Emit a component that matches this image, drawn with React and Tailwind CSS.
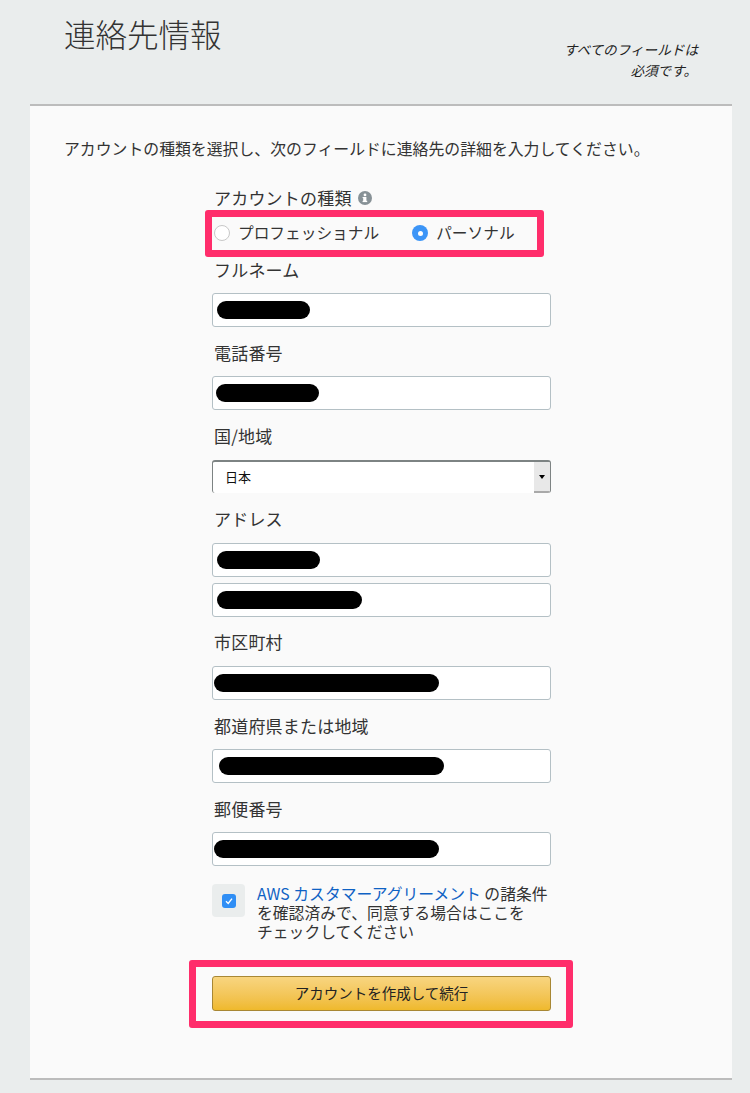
import React from 'react';

const fontStack = "font-['Noto_Sans_CJK_JP','Noto_Sans',sans-serif]";

const Label = ({ children, className = '' }) => (
  <div className={`pl-0.5 text-[17px] leading-[22px] tracking-[0.2px] text-[#333] ${className}`}>{children}</div>
);

// valeurs masquées au feutre noir
const Field = ({ scribble, className = '' }) => (
  <div className={`flex h-[34px] items-center rounded-[3px] border border-[#b4c0c5] bg-white ${className}`}>
    <div className={`h-[18px] rounded-full bg-black ${scribble}`} />
  </div>
);

const App = () => {
  return (
    <div className={`min-h-[1093px] bg-[#eaeded] ${fontStack}`}>
      {/* En-tête */}
      <div className="relative h-[104px]">
        <h1 className="pl-[64px] pt-[11px] text-[31.5px] font-light leading-[44px] text-[#333]">連絡先情報</h1>
        <div className="absolute left-[540px] top-[39px] w-[158px] text-right text-[13.6px] italic leading-[21px] text-[#222]">
          <div>すべてのフィールドは</div>
          <div className="pr-[1px]">必須です。</div>
        </div>
      </div>

      {/* Carte */}
      <div className="relative ml-[30px] mr-[18px] h-[976px] border-y-2 border-[#bcbcbc] bg-[#fafafa]">
        <p className="pl-[34px] pt-[32px] text-[15.86px] leading-[22px] text-[#333]">
          アカウントの種類を選択し、次のフィールドに連絡先の詳細を入力してください。
        </p>

        <div className="ml-[182px] mt-[27px] w-[339px]">
          <Label className="flex items-center gap-1.5">
            アカウントの種類
            <svg width="14" height="14" viewBox="0 0 14 14">
              <circle cx="7" cy="7" r="7" fill="#879196" />
              <rect x="5.2" y="6" width="3.2" height="4.4" fill="#fff" />
              <rect x="4.6" y="9.8" width="4.6" height="1.3" fill="#fff" />
              <rect x="4.6" y="6" width="2" height="1.1" fill="#fff" />
              <circle cx="7" cy="3.9" r="1.4" fill="#fff" />
            </svg>
          </Label>

          <div className="mt-[13px] flex h-[22px] items-center text-[15.7px] leading-[22px] text-[#333]">
            <span className="ml-[2px] h-[16px] w-[16px] rounded-full border border-[#c8c8c8] bg-white" />
            <span className="ml-[8px]">プロフェッショナル</span>
            <span className="ml-[33px] flex h-[16px] w-[16px] items-center justify-center rounded-full bg-[#3c95f7]">
              <span className="h-[5px] w-[5px] rounded-full bg-white" />
            </span>
            <span className="ml-[8px]">パーソナル</span>
          </div>

          <Label className="mt-[15px]">フルネーム</Label>
          <Field scribble="ml-[4px] w-[93px]" className="mt-[12px]" />

          <Label className="mt-[15px]">電話番号</Label>
          <Field scribble="ml-[3px] w-[103px]" className="mt-[12px]" />

          <Label className="mt-[15px]">国/地域</Label>
          <div className="mt-[13px] flex h-[33px] items-stretch overflow-hidden rounded-[3px] border-x border-t-2 border-[#7d8383] bg-white">
            <div className="flex flex-1 items-center pb-[2px] pl-[12px] text-[13px] text-[#111]">日本</div>
            <div className="flex w-[16px] items-center justify-center border-b-2 border-[#a9a9a9] bg-[#e8e8e8]">
              <div className="h-0 w-0 border-x-[3.5px] border-t-[4px] border-x-transparent border-t-black" />
            </div>
          </div>

          <Label className="mt-[15px]">アドレス</Label>
          <Field scribble="ml-[4px] w-[103px]" className="mt-[13px]" />
          <Field scribble="ml-[4px] w-[145px]" className="mt-[6px]" />

          <Label className="mt-[14px]">市区町村</Label>
          <Field scribble="ml-[1px] w-[225px]" className="mt-[13px]" />

          <Label className="mt-[15px]">都道府県または地域</Label>
          <Field scribble="ml-[6px] w-[225px]" className="mt-[12px]" />

          <Label className="mt-[15px]">郵便番号</Label>
          <Field scribble="ml-[1px] w-[225px]" className="mt-[12px]" />

          <div className="mt-[18px] flex">
            <div className="flex h-[33px] w-[33px] shrink-0 items-center justify-center rounded-[4px] bg-[#eaeded]">
              <div className="flex h-[14px] w-[14px] items-center justify-center rounded-[3px] bg-[#2f8ef5]">
                <svg width="10" height="10" viewBox="0 0 10 10" fill="none" stroke="#fff" strokeWidth="1.4">
                  <path d="M2 5.2 L4.2 7.4 L8 2.6" />
                </svg>
              </div>
            </div>
            <div className="ml-[12px] text-[15.8px] leading-[19px] text-[#333]">
              <a className="text-[#0f62c4]">AWS カスタマーアグリーメント</a> の諸条件
              <br />
              を確認済みで、同意する場合はここを
              <br />
              チェックしてください
            </div>
          </div>

          <button className="mt-[35px] h-[35px] w-full rounded-[3px] border border-[#a88734] bg-gradient-to-b from-[#f8d57f] to-[#efb92b] pb-[2px] text-[14.5px] text-[#222]">
            アカウントを作成して続行
          </button>
        </div>

        {/* Surlignages roses par-dessus la capture */}
        <div className="absolute left-[175px] top-[104px] h-[47px] w-[339px] rounded-[3px] border-[7px] border-[#ff2d6b]" />
        <div className="absolute left-[159px] top-[854px] h-[68px] w-[384px] rounded-[3px] border-[7px] border-[#ff2d6b]" />
      </div>
    </div>
  );
};

export default App;
